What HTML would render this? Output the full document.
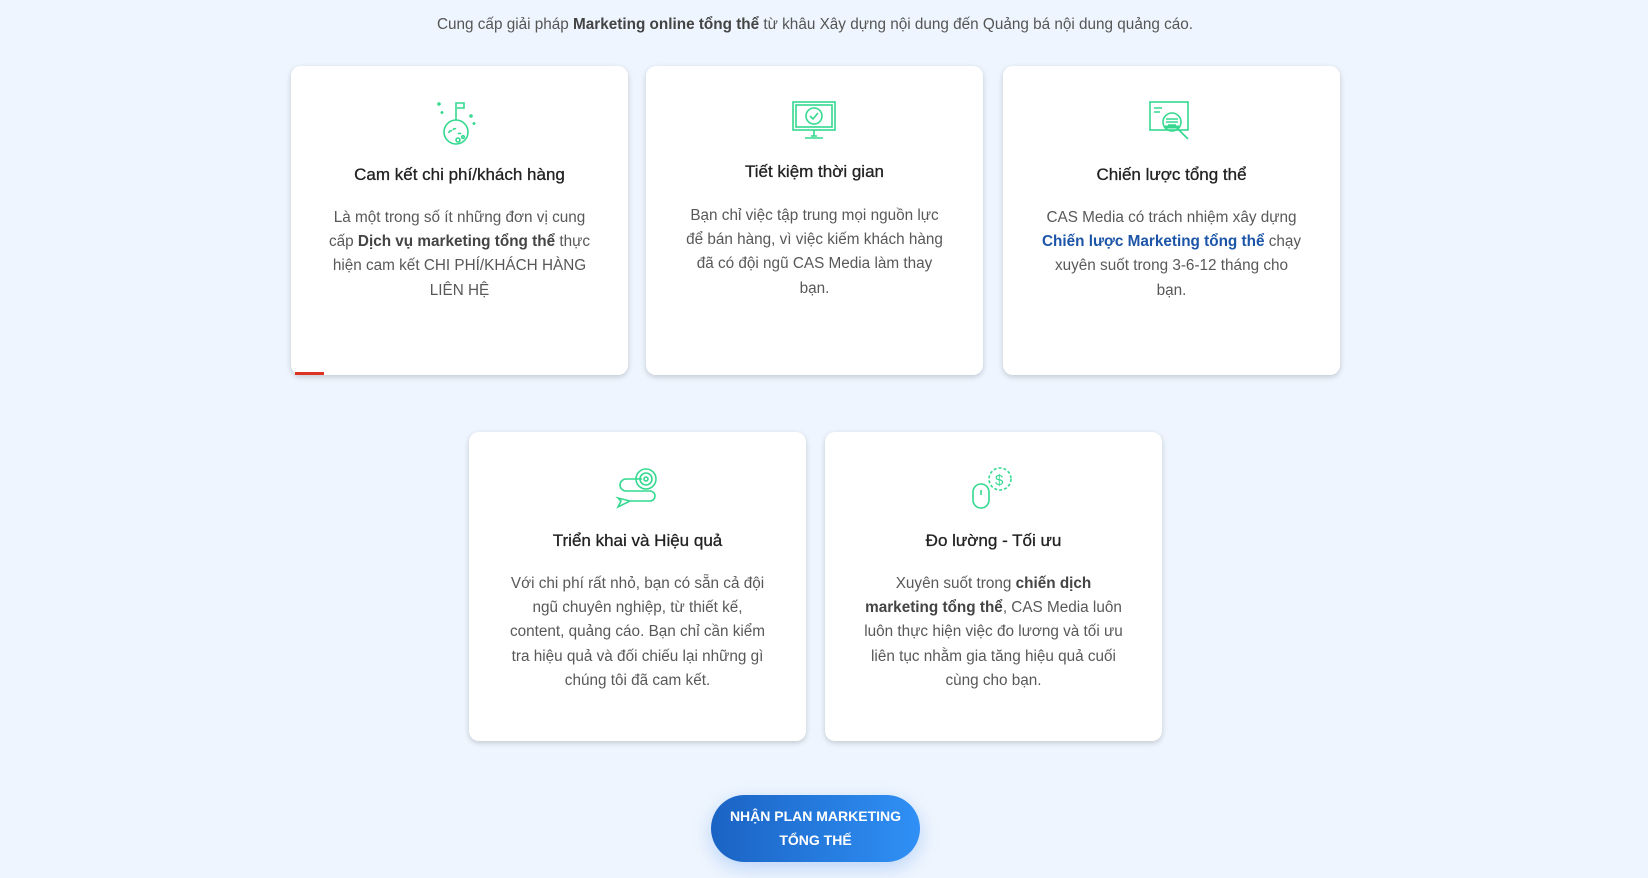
<!DOCTYPE html>
<html><head><meta charset="utf-8"><style>
*{box-sizing:border-box;margin:0;padding:0}
body{width:1648px;height:878px;background:#eef5fe;font-family:"Liberation Sans",Roboto,sans-serif;position:relative;overflow:hidden}
.top{position:absolute;top:16px;left:0;width:1630px;text-align:center;font-size:15.3px;color:#555}
.card{position:absolute;background:#fff;border-radius:10px;box-shadow:0 2px 6px rgba(0,0,0,.18);text-align:center;width:337px;height:309px}
.card svg{position:absolute;left:145px;top:34px}
.card h3{position:absolute;top:99px;left:0;right:0;font-size:17px;font-weight:normal;color:#222;-webkit-text-stroke:.3px #222}
.card p{position:absolute;top:140px;left:0;right:0;font-size:15.3px;line-height:24.2px;color:#585858;white-space:nowrap}
b{color:#444}
.btn{position:absolute;left:711px;top:795px;width:209px;height:67px;border-radius:34px;background:linear-gradient(90deg,#1a63c4,#3090f5);color:#fff;font-weight:bold;font-size:14px;line-height:24px;text-align:center;padding-top:9px;box-shadow:0 6px 18px rgba(40,120,230,.25)}
</style></head><body>
<div class="top">Cung cấp giải pháp <b>Marketing online tổng thể</b> từ khâu Xây dựng nội dung đến Quảng bá nội dung quảng cáo.</div>

<div class="card" style="left:291px;top:66px">
<svg width="46" height="48" viewBox="0 0 46 48" fill="none" stroke="#34d98f" stroke-width="1.6"><circle cx="20" cy="32" r="12"/><path d="M20 20V3h8v5h-7"/><path d="M13 33a2 2 0 0 1 3-2M17 30a2 2 0 0 1 3-1M22 34a2 2 0 0 1 3 0"/><circle cx="22" cy="40" r="2"/><circle cx="27" cy="37" r="1.3"/><circle cx="3" cy="4" r="1"/><circle cx="35" cy="16" r="1"/><path d="M38 22v3M36.5 23.5h3M6 11v3M4.5 12.5h3"/></svg>
<h3>Cam kết chi phí/khách hàng</h3>
<p>Là một trong số ít những đơn vị cung<br>cấp <b>Dịch vụ marketing tổng thể</b> thực<br>hiện cam kết CHI PHÍ/KHÁCH HÀNG<br>LIÊN HỆ</p>
<div style="position:absolute;left:4px;bottom:0;width:29px;height:3px;background:#d32"></div>
</div>

<div class="card" style="left:646px;top:66px">
<svg width="46" height="44" viewBox="0 0 46 44" fill="none" stroke="#34d98f" stroke-width="1.6"><rect x="2" y="2" width="42" height="28"/><rect x="5" y="5" width="36" height="22"/><circle cx="23" cy="16" r="8"/><path d="M19 16l3 3 5-6M23 30v6M14 38h18M20 36h6"/></svg>
<h3 style="top:96px">Tiết kiệm thời gian</h3>
<p style="top:138px">Bạn chỉ việc tập trung mọi nguồn lực<br>để bán hàng, vì việc kiếm khách hàng<br>đã có đội ngũ CAS Media làm thay<br>bạn.</p>
</div>

<div class="card" style="left:1003px;top:66px">
<svg width="46" height="48" viewBox="0 0 46 48" fill="none" stroke="#34d98f" stroke-width="1.6"><rect x="2" y="2" width="38" height="28"/><circle cx="24" cy="22" r="9"/><path d="M30 29l10 10M18 22h12M18 19h12M20 25h8M6 8h8M6 12h6"/><path d="M17 27h14" stroke-width="3"/></svg>
<h3>Chiến lược tổng thể</h3>
<p>CAS Media có trách nhiệm xây dựng<br><b style="color:#1c55a8">Chiến lược Marketing tổng thể</b> chạy<br>xuyên suốt trong 3-6-12 tháng cho<br>bạn.</p>
</div>

<div class="card" style="left:469px;top:432px">
<svg width="46" height="46" viewBox="0 0 46 46" fill="none" stroke="#34d98f" stroke-width="1.6"><circle cx="32" cy="13" r="10"/><circle cx="32" cy="13" r="6"/><circle cx="32" cy="13" r="2"/><path d="M28 13H12a6 6 0 0 0 0 12h24a5 5 0 0 1 0 10H16M4 32l12 3-12 6 3-6z"/></svg>
<h3>Triển khai và Hiệu quả</h3>
<p>Với chi phí rất nhỏ, bạn có sẵn cả đội<br>ngũ chuyên nghiệp, từ thiết kế,<br>content, quảng cáo. Bạn chỉ cần kiểm<br>tra hiệu quả và đối chiếu lại những gì<br>chúng tôi đã cam kết.</p>
</div>

<div class="card" style="left:825px;top:432px">
<svg width="46" height="46" viewBox="0 0 46 46" fill="none" stroke="#34d98f" stroke-width="1.6"><rect x="3" y="18" width="16" height="24" rx="8"/><path d="M11 24v5"/><circle cx="30" cy="13" r="11" stroke-dasharray="3 2"/><text x="25" y="19" font-size="15" fill="#34d98f" stroke="none" font-family="Liberation Sans">$</text></svg>
<h3>Đo lường - Tối ưu</h3>
<p>Xuyên suốt trong <b>chiến dịch</b><br><b>marketing tổng thể</b>, CAS Media luôn<br>luôn thực hiện việc đo lương và tối ưu<br>liên tục nhằm gia tăng hiệu quả cuối<br>cùng cho bạn.</p>
</div>

<div class="btn">NHẬN PLAN MARKETING<br>TỔNG THẾ</div>
</body></html>
